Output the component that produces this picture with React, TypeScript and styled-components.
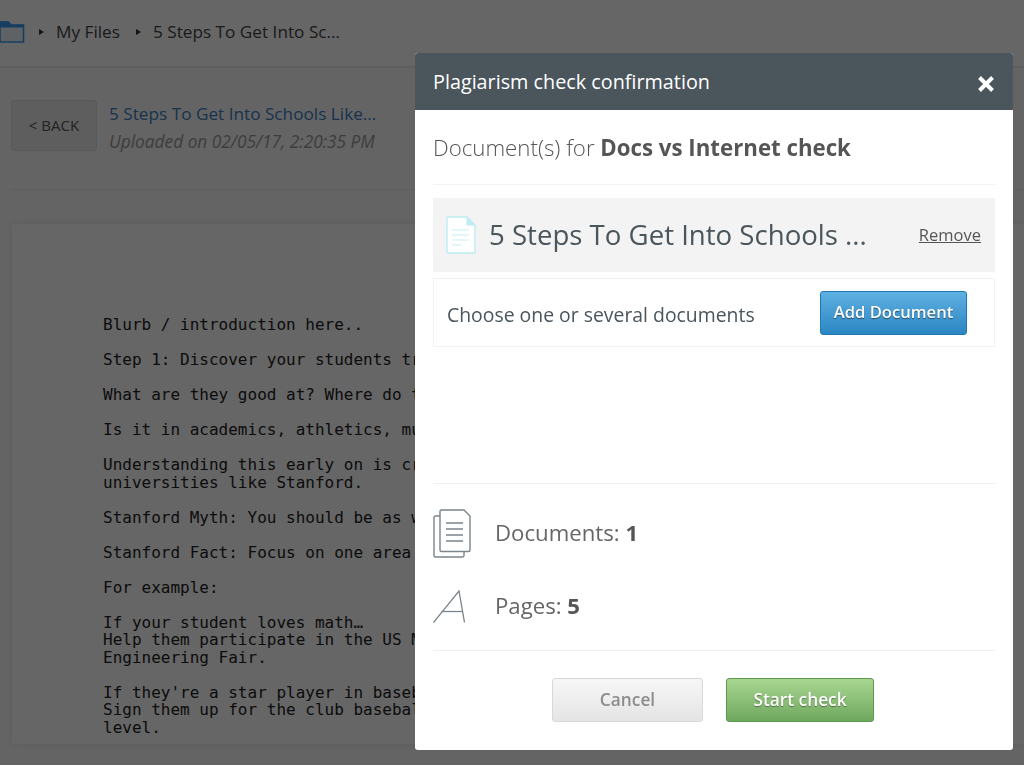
import React from 'react';
import styled, { createGlobalStyle } from 'styled-components';

const docLines = `Blurb / introduction here..

Step 1: Discover your students tr

What are they good at? Where do t

Is it in academics, athletics, mu

Understanding this early on is cr
universities like Stanford.

Stanford Myth: You should be as w

Stanford Fact: Focus on one area

For example:

If your student loves math…
Help them participate in the US M
Engineering Fair.

If they're a star player in baseb
Sign them up for the club basebal
level.`;

const FolderIcon = () => (
    <svg width="25" height="22" viewBox="0 0 25 22" fill="none">
        <path d="M0 1h8.500l2.500 3h12.500v17H0z" fill="#eef6fb" stroke="#3a9bf0" strokeWidth="1.600" />
        <path d="M0 1h8.500l2.500 3h12.500v2H0z" fill="#3a9bf0" stroke="#3a9bf0" strokeWidth="1" />
    </svg>
);

const CloseIcon = () => (
    <svg width="16" height="16" viewBox="0 0 16 16" fill="none" stroke="#fff" strokeWidth="4">
        <path d="M1.500 1.500l13 13M14.500 1.500l-13 13" />
    </svg>
);

const FileIcon = () => (
    <svg width="30" height="38" viewBox="0 0 30 38" fill="none">
        <path d="M2 1h19l8 8v27a1 1 0 0 1-1 1H2a1 1 0 0 1-1-1V2a1 1 0 0 1 1-1z" fill="#fff" stroke="#bdecf1" strokeWidth="1.400" />
        <path d="M20.500 1l8.500 8.500h-8.500z" fill="#bdecf1" />
        <path d="M6 14h17M6 19h17M6 24h17M6 29h9" stroke="#c8eef3" strokeWidth="1.200" />
    </svg>
);

const DocsIcon = () => (
    <svg width="38" height="49" viewBox="0 0 38 49" fill="none" stroke="#7b858c" strokeWidth="1.400">
        <path d="M7 7H2.500A1.500 1.500 0 0 0 1 8.500v38A1.500 1.500 0 0 0 2.500 48h27a1.500 1.500 0 0 0 1.500-1.500V42.500" />
        <path d="M8.500 1H31l6 6v34a1.500 1.500 0 0 1-1.500 1.500h-27A1.500 1.500 0 0 1 7 41V2.500A1.500 1.500 0 0 1 8.500 1z" fill="#fff" />
        <path d="M13 14h17M13 20h17M13 26h17M13 32h17" />
    </svg>
);

const LetterIcon = () => (
    <svg width="34" height="33" viewBox="0 0 34 33" fill="none" stroke="#7b858c" strokeWidth="1.300">
        <path d="M0.500 32.500L26 1l5.500 31.500" />
        <path d="M8.500 21.500h21" />
    </svg>
);

export default function App() {
    return (
        <>
            <GlobalStyle />
            <Page>
                <TopBar>
                    <FolderSlot><FolderIcon /></FolderSlot>
                    <Crumb>My Files</Crumb>
                    <Crumb>5 Steps To Get Into Sc...</Crumb>
                </TopBar>
                <Content>
                    <FileRow>
                        <BackButton>&lt; BACK</BackButton>
                        <div>
                            <FileTitle>5 Steps To Get Into Schools Like...</FileTitle>
                            <FileDate>Uploaded on 02/05/17, 2:20:35 PM</FileDate>
                        </div>
                    </FileRow>
                    <DocSheet>
                        <DocText>{docLines}</DocText>
                    </DocSheet>
                </Content>
            </Page>
            <Scrim />
            <Modal>
                <ModalHead>
                    <span>Plagiarism check confirmation</span>
                    <CloseIcon />
                </ModalHead>
                <ModalBody>
                    <Heading>Document(s) for <strong>Docs vs Internet check</strong></Heading>
                    <SelectedRow>
                        <FileIcon />
                        <SelectedName>5 Steps To Get Into Schools ...</SelectedName>
                        <RemoveLink>Remove</RemoveLink>
                    </SelectedRow>
                    <ChooseRow>
                        <ChooseLabel>Choose one or several documents</ChooseLabel>
                        <ActionButton $variant="blue" $width={147}>Add Document</ActionButton>
                    </ChooseRow>
                    <Stats>
                        <StatRow>
                            <StatIcon><DocsIcon /></StatIcon>
                            <StatText>Documents: <strong>1</strong></StatText>
                        </StatRow>
                        <StatRow>
                            <StatIcon><LetterIcon /></StatIcon>
                            <StatText>Pages: <strong>5</strong></StatText>
                        </StatRow>
                    </Stats>
                </ModalBody>
                <ModalFoot>
                    <ActionButton $variant="grey" $width={151}>Cancel</ActionButton>
                    <ActionButton $variant="green" $width={148}>Start check</ActionButton>
                </ModalFoot>
            </Modal>
        </>
    );
}

const GlobalStyle = createGlobalStyle`
    html, body {
        margin: 0;
        padding: 0;
        background: #fff;
        font-family: "Open Sans", "Liberation Sans", sans-serif;
        overflow: hidden;
    }
    * {
        box-sizing: border-box;
    }
`;

const Page = styled.div`
    width: 1024px;
    height: 765px;
    overflow: hidden;
    background: #fafafa;
`;

const TopBar = styled.div`
    height: 67px;
    display: flex;
    align-items: center;
    background: #fff;
    border-bottom: 1px solid #e4e4e4;
    box-shadow: 0 1px 2px rgba(0, 0, 0, 0.06);
    color: #444;
    font-size: 17.2px;
`;

const FolderSlot = styled.div`
    width: 25px;
    height: 22px;
    margin-top: -3px;
`;

const Crumb = styled.div`
    display: flex;
    align-items: center;
    margin-left: 14px;
    margin-top: -3px;

    &::before {
        content: "";
        border-left: 5px solid #333;
        border-top: 3px solid transparent;
        border-bottom: 3px solid transparent;
        margin-right: 12px;
    }

    & + & {
        margin-left: 16px;
    }
`;

const Content = styled.div`
    padding: 33px 0 0 11px;
`;

const FileRow = styled.div`
    display: flex;
    gap: 12px;
    height: 90px;
    border-bottom: 1px solid #eaeaea;
`;

const BackButton = styled.div`
    width: 86px;
    height: 51px;
    display: flex;
    align-items: center;
    justify-content: center;
    padding-bottom: 1px;
    background: #ececec;
    border: 1px solid #dedede;
    border-radius: 3px;
    color: #555;
    font-size: 15px;
`;

const FileTitle = styled.div`
    color: #3c7fc4;
    font-size: 17.2px;
    line-height: 22px;
    margin-top: 3px;
`;

const FileDate = styled.div`
    color: #999;
    font-size: 17.300px;
    font-style: italic;
    line-height: 22px;
    margin-top: 6px;
`;

const DocSheet = styled.div`
    margin-top: 34px;
    margin-left: 1px;
    height: 520px;
    background: #fff;
    box-shadow: 0 0 8px rgba(0, 0, 0, 0.08);
    padding: 92px 0 0 91px;
`;

const DocText = styled.pre`
    margin: 0;
    font-family: "DejaVu Sans Mono", monospace;
    font-size: 16px;
    line-height: 17.5px;
    color: #222;
`;

const Scrim = styled.div`
    position: fixed;
    inset: 0;
    background: rgba(0, 0, 0, 0.6);
`;

const Modal = styled.div`
    position: fixed;
    left: 415px;
    top: 53px;
    width: 598px;
    height: 697px;
    display: flex;
    flex-direction: column;
    background: #fff;
    border-radius: 3px;
    overflow: hidden;
`;

const ModalHead = styled.div`
    height: 57px;
    flex: none;
    display: flex;
    align-items: center;
    justify-content: space-between;
    padding: 0 19px 0 18px;
    background: #4a555c;
    color: #fff;
    font-size: 19.800px;

    svg {
        margin-top: 5px;
    }
`;

const ModalBody = styled.div`
    flex: 1;
    padding: 0 18px;
`;

const Heading = styled.div`
    height: 75px;
    padding-top: 23px;
    font-size: 22.250px;
    font-weight: 300;
    line-height: 30px;
    color: #555;
    border-bottom: 1px solid #f2f2f2;

    strong {
        font-weight: 700;
    }
`;

const SelectedRow = styled.div`
    height: 74px;
    margin-top: 13px;
    display: flex;
    align-items: center;
    padding: 0 14px 0 13px;
    background: #f3f3f3;
`;

const SelectedName = styled.div`
    flex: 1;
    margin: -2px 0 0 13px;
    font-size: 27.600px;
    color: #4a555c;
`;

const RemoveLink = styled.span`
    margin-top: -2px;
    font-size: 16.500px;
    color: #555;
    text-decoration: underline;
`;

const ChooseRow = styled.div`
    height: 69px;
    margin-top: 6px;
    display: flex;
    align-items: center;
    justify-content: space-between;
    padding: 0 27px 0 13px;
    border: 1px solid #f2f2f2;
    font-size: 19.400px;
    color: #4a555c;
`;

const ChooseLabel = styled.span`
    margin-top: 4px;
`;

const Stats = styled.div`
    margin-top: 136px;
    height: 168px;
    padding-top: 13px;
    border-top: 1px solid #f0f0f0;
    border-bottom: 1px solid #f0f0f0;
    color: #666;
    font-size: 22.200px;
`;

const StatRow = styled.div`
    height: 73px;
    display: flex;
    align-items: center;

    strong {
        font-weight: 700;
        color: #555;
    }
`;

const StatText = styled.span`
    margin-bottom: 2px;
`;

const StatIcon = styled.div`
    width: 62px;
    flex: none;
    display: flex;
`;

const variants = {
    blue: `
        padding-bottom: 3px;
        background: linear-gradient(#5fb0e2, #2b86c2);
        border: 1px solid #1f78b0;
        color: #fff;
        font-size: 16.600px;
        text-shadow: 0 1px 1px rgba(0, 0, 0, 0.5);
    `,
    green: `
        padding-bottom: 1px;
        background: linear-gradient(#a9d792, #6fa75e);
        border: 1px solid #5a9a4c;
        color: #fff;
        font-size: 17.300px;
        text-shadow: 0 1px 1px rgba(0, 0, 0, 0.4);
    `,
    grey: `
        padding-bottom: 1px;
        background: linear-gradient(#f7f7f7, #e4e4e4);
        border: 1px solid #d8d8d8;
        color: #8c8c8c;
        font-size: 17.300px;
    `,
};

const ActionButton = styled.div<{ $variant: keyof typeof variants; $width: number }>`
    width: ${props => props.$width}px;
    height: 44px;
    display: flex;
    align-items: center;
    justify-content: center;
    border-radius: 3px;
    font-weight: 600;
    ${props => variants[props.$variant]}
`;

const ModalFoot = styled.div`
    flex: none;
    height: 98px;
    display: flex;
    justify-content: center;
    gap: 23px;
    padding-top: 26px;
    padding-right: 2px;
`;
